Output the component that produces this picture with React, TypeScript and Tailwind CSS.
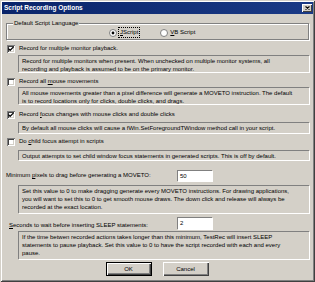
import React from "react";

const font = { fontFamily: '"Liberation Sans", Arial, sans-serif' };

const CheckBox = ({ checked }: { checked?: boolean }) => (
  <div className="w-[8px] h-[8px] bg-white shadow-[inset_1px_1px_#808080,inset_-1px_-1px_#ffffff,inset_2px_2px_#404040,inset_-2px_-2px_#d4d0c8] flex items-center justify-center shrink-0">
    {checked && (
      <svg width="6" height="6" viewBox="0 0 7 7">
        <path d="M0.5 3 L2.5 5 L6.5 1" stroke="#000" strokeWidth="1.4" fill="none" />
      </svg>
    )}
  </div>
);

const Radio = ({ checked }: { checked?: boolean }) => (
  <svg width="8" height="8" viewBox="0 0 8 8" className="shrink-0">
    <circle cx="4" cy="4" r="3.5" fill="#fff" stroke="#808080" />
    {checked && <circle cx="4" cy="4" r="1.4" fill="#000" />}
  </svg>
);

const Desc = ({ h, lines }: { h: string; lines: string[] }) => (
  <div className={`ml-[13px] mr-[1px] ${h} px-[3px] pt-[1px] border-t border-l border-[#808080] shadow-[1px_1px_#ffffff] leading-[8px] whitespace-nowrap overflow-hidden`}>
    {lines.map((l, i) => (
      <div key={i}>{l}</div>
    ))}
  </div>
);

const Row = ({ checked, children, mt }: { checked?: boolean; children: React.ReactNode; mt: string }) => (
  <div className={`${mt} h-[9px] flex items-center gap-[4px] pl-[2px]`}>
    <CheckBox checked={checked} />
    <span className="whitespace-nowrap">{children}</span>
  </div>
);

const Button = ({ children, def }: { children: React.ReactNode; def?: boolean }) => (
  <div
    className={`h-[14px] w-[46px] flex items-center justify-center bg-[#d4d0c8] ${
      def
        ? "border border-black shadow-[inset_1px_1px_#ffffff,inset_-1px_-1px_#404040,inset_-2px_-2px_#808080]"
        : "shadow-[inset_1px_1px_#ffffff,inset_-1px_-1px_#404040,inset_-2px_-2px_#808080]"
    }`}
  >
    {children}
  </div>
);

export default function App() {
  return (
    <div
      className="w-[315px] h-[282px] bg-[#d4d0c8] text-black text-[6px] p-[2px] shadow-[inset_1px_1px_#d4d0c8,inset_-1px_-1px_#404040,inset_2px_2px_#ffffff,inset_-2px_-2px_#808080] flex flex-col"
      style={font}
    >
      <div className="h-[12px] bg-gradient-to-r from-[#0a246a] to-[#1a3a86] flex items-center justify-between pl-[2px] pr-[1px]">
        <span className="text-white font-bold text-[6.5px]">Script Recording Options</span>
        <div className="w-[10px] h-[8px] bg-[#d4d0c8] shadow-[inset_1px_1px_#ffffff,inset_-1px_-1px_#404040] flex items-center justify-center">
          <svg width="5" height="4" viewBox="0 0 5 4">
            <path d="M0.5 0.5 L4.5 3.5 M4.5 0.5 L0.5 3.5" stroke="#000" strokeWidth="1.1" />
          </svg>
        </div>
      </div>

      <div className="flex flex-col px-[3px]">
        <div className="relative mt-[9px] h-[17px] border border-[#808080] shadow-[1px_1px_#ffffff,inset_1px_1px_#ffffff] mx-[1px]">
          <span className="absolute left-[6px] -top-[5px] bg-[#d4d0c8] px-[1px] whitespace-nowrap">Default Script Language</span>
          <div className="h-full flex items-center pt-[2px]">
            <div className="ml-[102px] flex items-center gap-[2px]">
              <Radio checked />
              <span className="outline outline-1 outline-dotted outline-black px-[1px]">
                <u>J</u>Script
              </span>
            </div>
            <div className="ml-[21px] flex items-center gap-[2px]">
              <Radio />
              <span>
                <u>V</u>B Script
              </span>
            </div>
          </div>
        </div>

        <Row checked mt="mt-[4px]">Record for multiple monitor playback.</Row>
        <Desc
          h="mt-[2px] h-[17px]"
          lines={[
            "Record for multiple monitors when present. When unchecked on multiple monitor systems, all",
            "recording and playback is assumed to be on the primary monitor.",
          ]}
        />

        <Row mt="mt-[5px]">
          Record all <u>m</u>ouse movements
        </Row>
        <Desc
          h="mt-[1px] h-[17px]"
          lines={[
            "All mouse movements greater than a pixel difference will generate a MOVETO instruction. The default",
            "is to record locations only for clicks, double clicks, and drags.",
          ]}
        />

        <Row checked mt="mt-[6px]">
          Record <u>f</u>ocus changes with mouse clicks and double clicks
        </Row>
        <Desc
          h="mt-[3px] h-[11px]"
          lines={["By default all mouse clicks will cause a fWin.SetForegroundTWindow method call in your script."]}
        />

        <Row mt="mt-[4px]">
          Do <u>c</u>hild focus attempt in scripts
        </Row>
        <Desc
          h="mt-[4px] h-[10px]"
          lines={["Output attempts to set child window focus statements in generated scripts. This is off by default."]}
        />

        <div className="mt-[10px] h-[11px] flex items-center">
          <span className="w-[172px] pl-[1px] whitespace-nowrap">
            Minimum <u>p</u>ixels to drag before generating a MOVETO:
          </span>
          <div className="w-[35px] h-[11px] bg-white border-t border-l border-[#808080] shadow-[1px_1px_#ffffff] px-[2px] leading-[10px]">
            50
          </div>
        </div>
        <Desc
          h="mt-[4px] h-[28px]"
          lines={[
            "Set this value to 0 to make dragging generate every MOVETO instructions. For drawing applications,",
            "you will want to set this to 0 to get smooth mouse draws. The down click and release will always be",
            "recorded at the exact location.",
          ]}
        />

        <div className="mt-[4px] h-[12px] flex items-center">
          <span className="w-[172px] pl-[4px] pt-[4px] whitespace-nowrap">
            <u>S</u>econds to wait before inserting SLEEP statements:
          </span>
          <div className="w-[35px] h-[12px] bg-white border-t border-l border-[#808080] shadow-[1px_1px_#ffffff] px-[2px] leading-[11px]">
            2
          </div>
        </div>
        <Desc
          h="mt-[2px] h-[28px]"
          lines={[
            "If the time betwen recorded actions takes longer than this minimum, TestRec will insert SLEEP",
            "statements to pause playback. Set this value to 0 to have the script recorded with each and every",
            "pause.",
          ]}
        />

        <div className="mt-[3px] flex justify-center gap-[11px] pr-[1px]">
          <Button def>OK</Button>
          <Button>Cancel</Button>
        </div>
      </div>
    </div>
  );
}
